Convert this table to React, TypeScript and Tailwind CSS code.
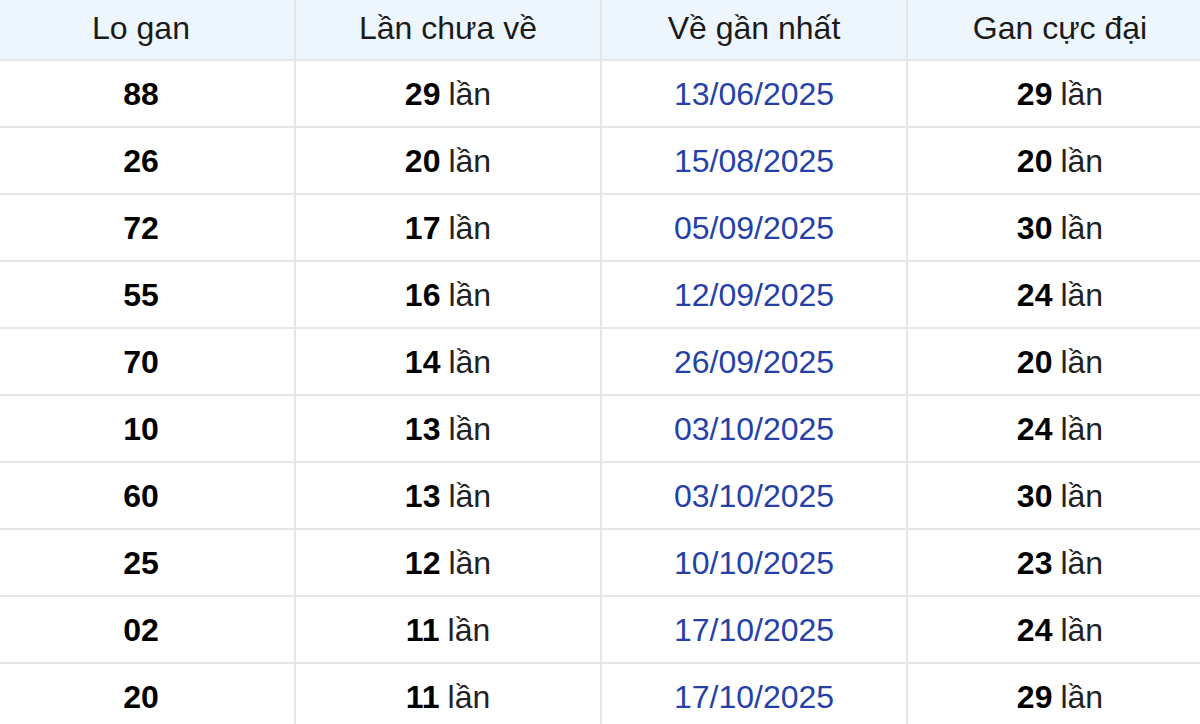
const ROWS: { lo: string; chua: number; ngay: string; max: number }[] = [
  { lo: "88", chua: 29, ngay: "13/06/2025", max: 29 },
  { lo: "26", chua: 20, ngay: "15/08/2025", max: 20 },
  { lo: "72", chua: 17, ngay: "05/09/2025", max: 30 },
  { lo: "55", chua: 16, ngay: "12/09/2025", max: 24 },
  { lo: "70", chua: 14, ngay: "26/09/2025", max: 20 },
  { lo: "10", chua: 13, ngay: "03/10/2025", max: 24 },
  { lo: "60", chua: 13, ngay: "03/10/2025", max: 30 },
  { lo: "25", chua: 12, ngay: "10/10/2025", max: 23 },
  { lo: "02", chua: 11, ngay: "17/10/2025", max: 24 },
  { lo: "20", chua: 11, ngay: "17/10/2025", max: 29 },
];

const HEADERS = ["Lo gan", "Lần chưa về", "Về gần nhất", "Gan cực đại"];

export default function App() {
  return (
    <div
      className="w-[1200px] h-[724px] overflow-hidden bg-white text-[32px] text-[#111]"
      style={{ fontFamily: '"Liberation Sans", Arial, sans-serif' }}
    >
      <div className="w-[1224px] -ml-[12px]">
        {/* header */}
        <div className="grid grid-cols-4 h-[61px] bg-[#eef6fd] border-b-2 border-[#e3e6ea]">
          {HEADERS.map((h, i) => (
            <div
              key={h}
              className={`flex items-center justify-center pb-[3px] text-[#1a1a1a] ${
                i > 0 ? "border-l-2 border-[#e3e6ea]" : ""
              }`}
            >
              {h}
            </div>
          ))}
        </div>

        {/* rows */}
        {ROWS.map((r, i) => (
          <div
            key={i}
            className="grid grid-cols-4 h-[67px] border-b-2 border-[#e6e6e6]"
          >
            <div className="flex items-center justify-center font-bold text-black">
              {r.lo}
            </div>
            <div className="flex items-center justify-center border-l-2 border-[#e6e6e6]">
              <b className="text-black">{r.chua}</b>
              <span className="ml-[8px] text-[#222]">lần</span>
            </div>
            <div className="flex items-center justify-center border-l-2 border-[#e6e6e6] text-[#2541a8]">
              {r.ngay}
            </div>
            <div className="flex items-center justify-center border-l-2 border-[#e6e6e6]">
              <b className="text-black">{r.max}</b>
              <span className="ml-[8px] text-[#222]">lần</span>
            </div>
          </div>
        ))}
      </div>
    </div>
  );
}
